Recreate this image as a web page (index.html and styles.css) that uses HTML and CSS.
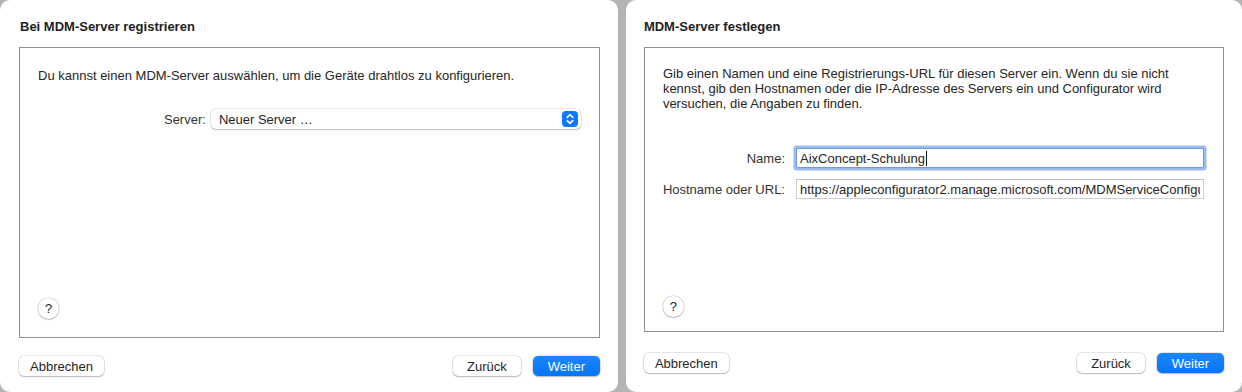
FILE: index.html
```html
<!DOCTYPE html>
<html lang="de">
<head>
    <meta charset="UTF-8">
    <meta name="viewport" content="width=device-width, initial-scale=1.0">
    <title>MDM-Server</title>
    <link rel="stylesheet" href="styles.css">
</head>
<body>
    <!-- Schritt 1: Server auswählen -->
    <div class="sheet sheet-left">
        <h1 class="sheet-title">Bei MDM-Server registrieren</h1>
        <div class="panel">
            <p class="intro">Du kannst einen MDM-Server auswählen, um die Geräte drahtlos zu konfigurieren.</p>
            <div class="form-row server-row">
                <label class="form-label">Server:</label>
                <div class="popup">
                    <span>Neuer Server …</span>
                    <span class="stepper">
                        <svg width="8" height="12" viewBox="0 0 8 12"><path d="M1.2 4.4 4 1.6l2.8 2.8M1.2 7.6 4 10.4l2.8-2.8" fill="none" stroke="#fff" stroke-width="1.5" stroke-linecap="round" stroke-linejoin="round"/></svg>
                    </span>
                </div>
            </div>
            <button class="help">?</button>
        </div>
        <div class="actions">
            <button class="btn">Abbrechen</button>
            <div class="actions-right">
                <button class="btn btn-back">Zurück</button>
                <button class="btn btn-primary">Weiter</button>
            </div>
        </div>
    </div>

    <!-- Schritt 2: Server festlegen -->
    <div class="sheet sheet-right">
        <h1 class="sheet-title">MDM-Server festlegen</h1>
        <div class="panel">
            <p class="intro">Gib einen Namen und eine Registrierungs-URL für diesen Server ein. Wenn du sie nicht<br>
                kennst, gib den Hostnamen oder die IP-Adresse des Servers ein und Configurator wird<br>
                versuchen, die Angaben zu finden.</p>
            <div class="fields">
                <div class="form-row">
                    <label class="form-label">Name:</label>
                    <div class="field field-focus">AixConcept-Schulung<span class="caret"></span></div>
                </div>
                <div class="form-row">
                    <label class="form-label">Hostname oder URL:</label>
                    <input class="field" type="text" value="https://appleconfigurator2.manage.microsoft.com/MDMServiceConfiguration">
                </div>
            </div>
            <button class="help">?</button>
        </div>
        <div class="actions">
            <button class="btn">Abbrechen</button>
            <div class="actions-right">
                <button class="btn btn-back">Zurück</button>
                <button class="btn btn-primary">Weiter</button>
            </div>
        </div>
    </div>
</body>
</html>
```

FILE: styles.css
```css
* {
    box-sizing: border-box;
}
body {
    margin: 0;
    height: 392px;
    display: flex;
    gap: 8px;
    background-color: #b4b4b4;
    font-family: "Liberation Sans", Arial, sans-serif;
    font-size: 13px;
    color: #262626;
    overflow: hidden;
}
.sheet {
    background-color: #fff;
    border-radius: 10px;
    display: flex;
    flex-direction: column;
    padding: 19px 18px 16px 19px;
}
.sheet-left {
    width: 618px;
}
.sheet-right {
    flex: 1;
    padding: 19px 18px 19px 18px;
}
.sheet-title {
    margin: 0 0 12px 1px;
    font-size: 13px;
    line-height: 16px;
    font-weight: bold;
    color: #1e1e1e;
}
.sheet-right .sheet-title {
    margin-left: 0;
}
.panel {
    flex: 1;
    border: 1px solid #8f8f8f;
    display: flex;
    flex-direction: column;
    padding: 20px 18px 18px 18px;
}
.sheet-right .panel {
    padding: 18px 19px 14px 18px;
}
.intro {
    margin: 0;
    line-height: 15px;
    white-space: nowrap;
}
.form-row {
    display: flex;
    justify-content: flex-end;
    align-items: center;
    gap: 5px;
}
.server-row {
    margin-top: 26px;
}
.form-label {
    color: #333;
    white-space: nowrap;
}
.popup {
    width: 370px;
    height: 20px;
    border-radius: 5px;
    background-color: #fff;
    box-shadow: 0 0 0 0.5px rgba(0, 0, 0, 0.18), 0 1px 1.5px rgba(0, 0, 0, 0.18);
    display: flex;
    align-items: center;
    justify-content: space-between;
    padding: 0 3px 0 8px;
}
.stepper {
    width: 16px;
    height: 16px;
    border-radius: 4px;
    background-color: #0a7aff;
    display: flex;
    align-items: center;
    justify-content: center;
}
.fields {
    margin-top: 37px;
    display: flex;
    flex-direction: column;
    gap: 11px;
}
.fields .form-row {
    gap: 11px;
}
.field {
    width: 408px;
    height: 20px;
    border: 1px solid #cfcfcf;
    border-top-color: #b8b8b8;
    background-color: #fff;
    padding: 0 3px;
    font: inherit;
    color: #262626;
    display: flex;
    align-items: center;
    outline: none;
}
.field-focus {
    border-color: #6e9be0;
    box-shadow: 0 0 0 2.5px #9dbcee;
    border-radius: 1px;
}
.caret {
    display: inline-block;
    width: 1px;
    height: 15px;
    background-color: #111;
    margin-left: 1px;
}
.help {
    margin-top: auto;
    width: 21px;
    height: 21px;
    border-radius: 50%;
    border: none;
    background-color: #fff;
    box-shadow: 0 0 0 0.5px rgba(0, 0, 0, 0.2), 0 1px 1.5px rgba(0, 0, 0, 0.2);
    font-family: inherit;
    font-size: 13px;
    color: #262626;
    padding: 0;
}
.actions {
    margin-top: 18px;
    display: flex;
    justify-content: space-between;
    align-items: center;
}
.sheet-right .actions {
    margin-top: 21px;
}
.actions-right {
    display: flex;
    gap: 12px;
}
.btn {
    height: 20px;
    min-width: 67px;
    padding: 0 11px;
    border: none;
    border-radius: 5px;
    background-color: #fff;
    box-shadow: 0 0 0 0.5px rgba(0, 0, 0, 0.2), 0 1px 1.5px rgba(0, 0, 0, 0.2);
    font-family: inherit;
    font-size: 13px;
    color: #262626;
}
.btn-back {
    width: 68px;
}
.btn-primary {
    width: 67px;
    background: linear-gradient(#1a86ff, #0675f5);
    color: #fff;
}
```
